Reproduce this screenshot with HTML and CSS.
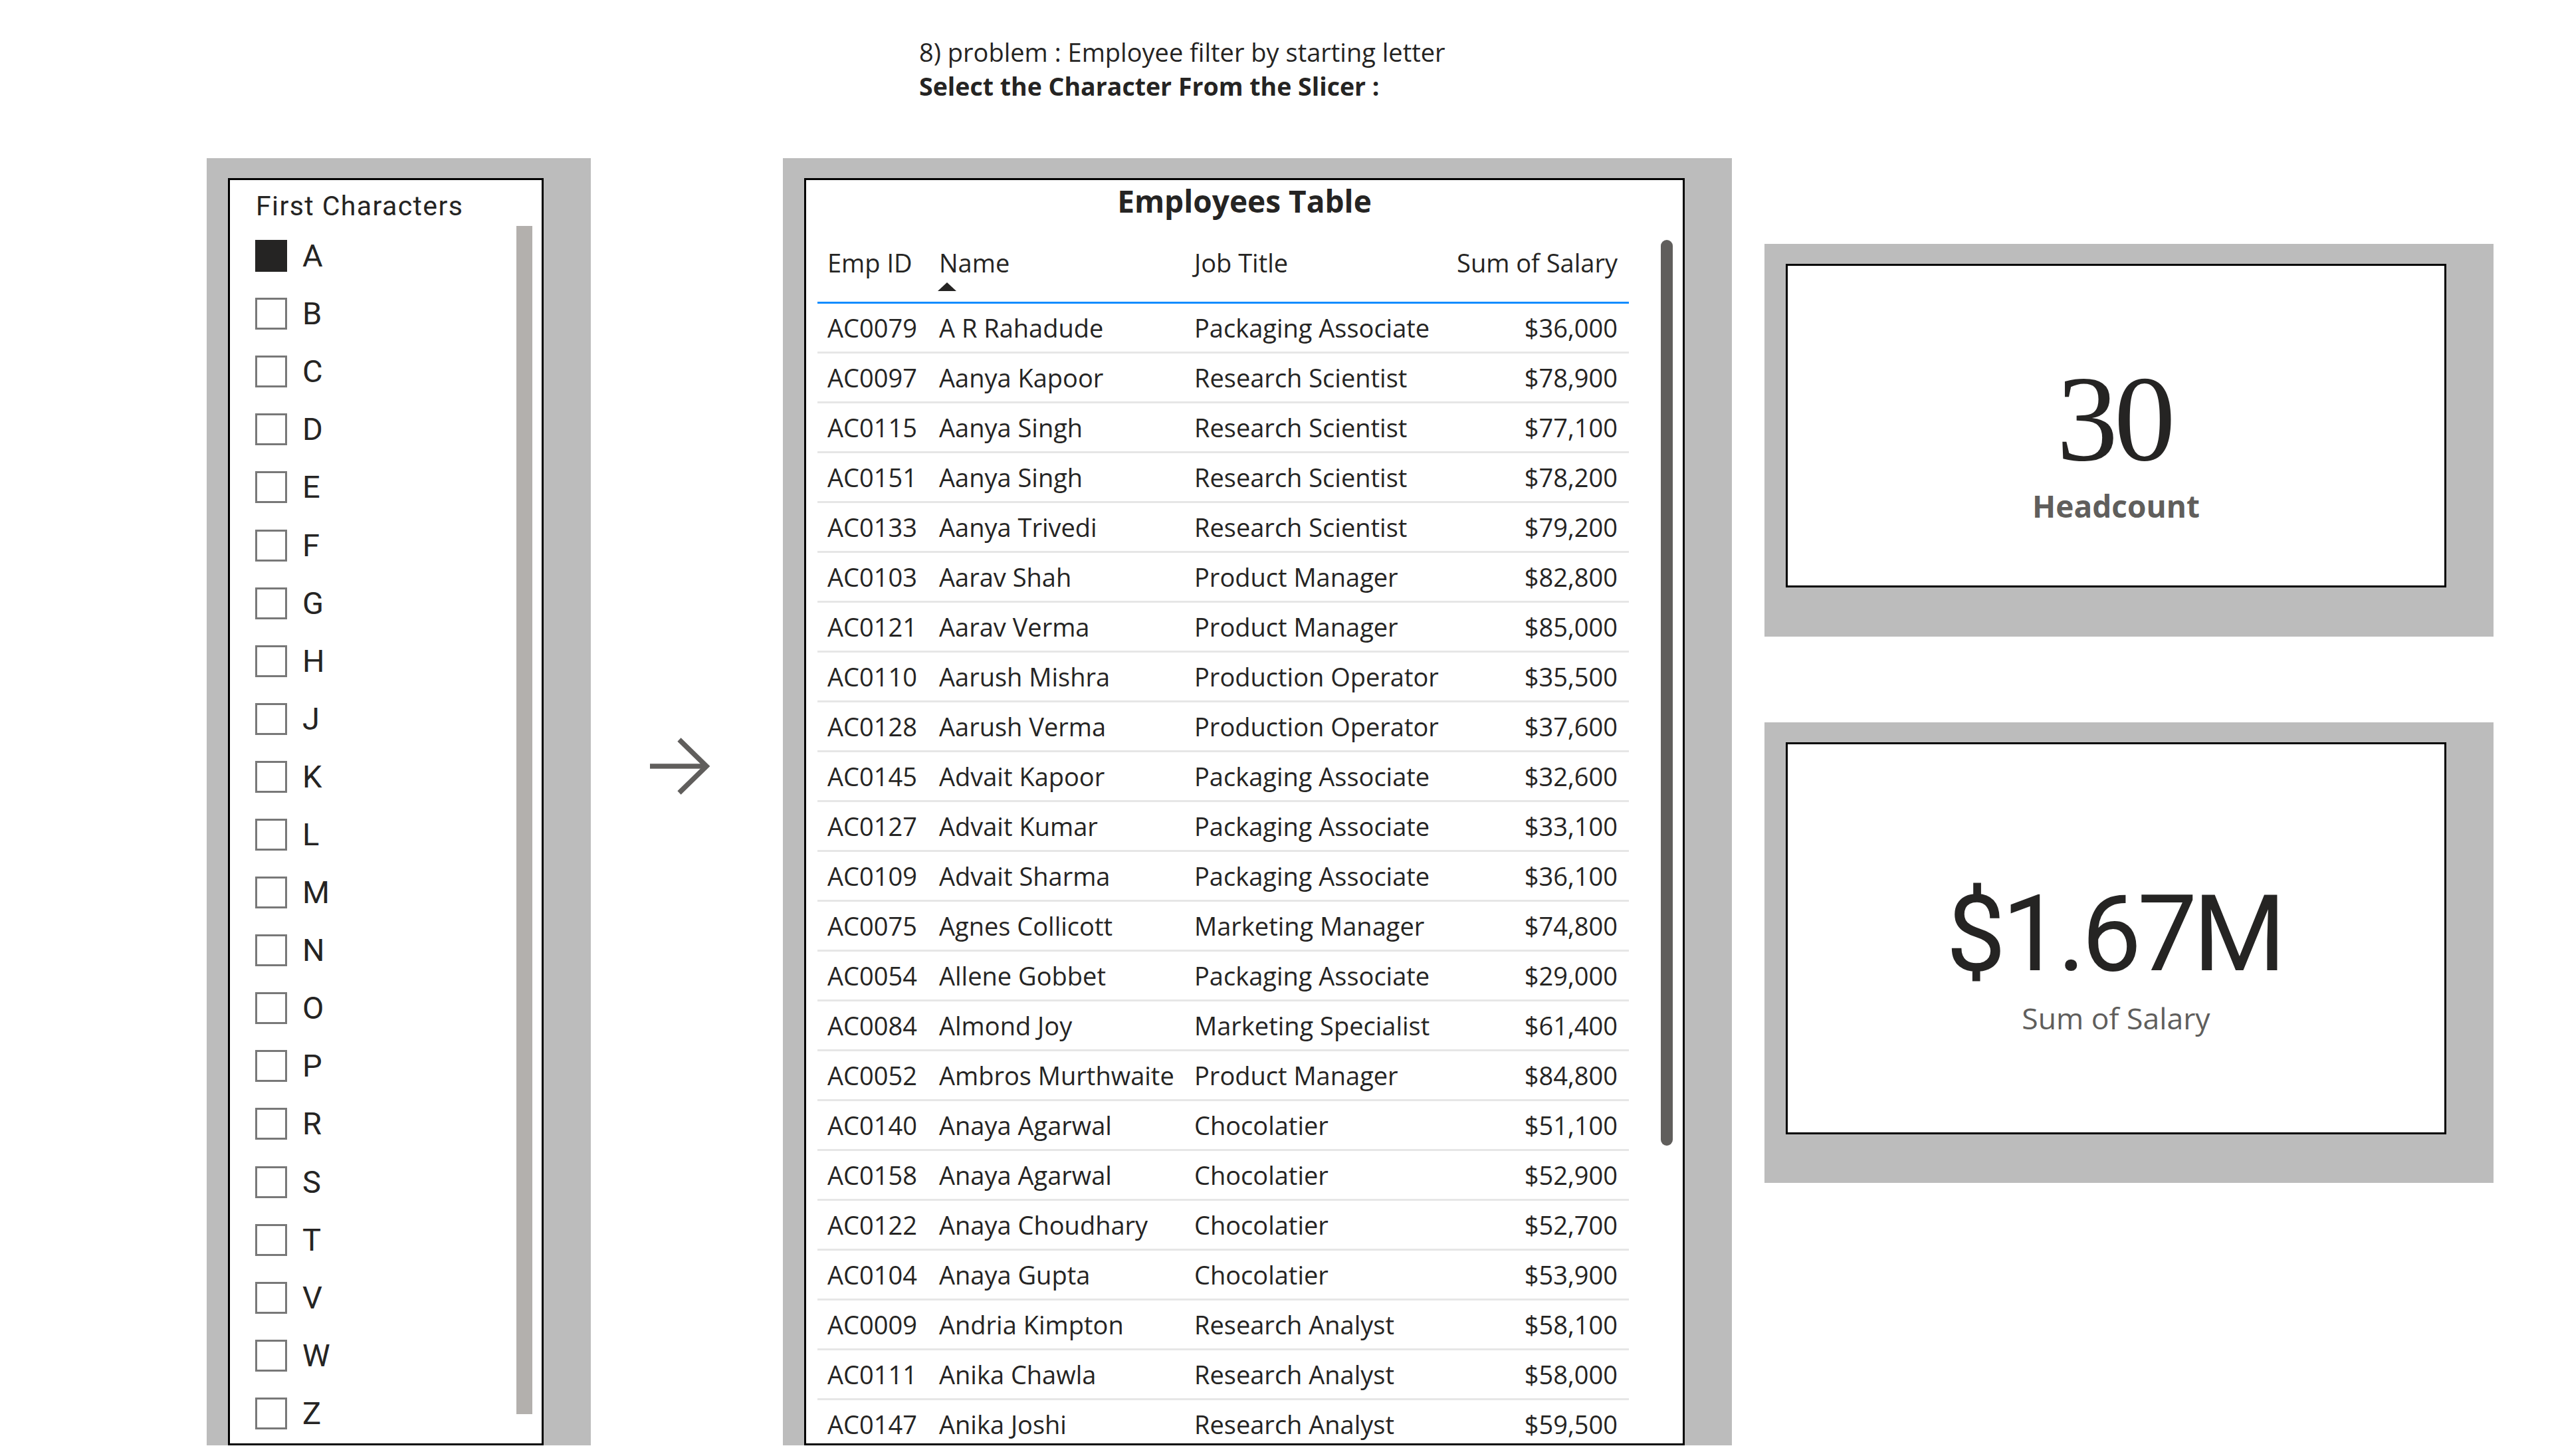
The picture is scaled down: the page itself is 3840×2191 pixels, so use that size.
FILE: index.html
```html
<!DOCTYPE html>
<html lang="en">
<head>
<meta charset="utf-8">
<title>Employee filter by starting letter</title>
<link rel="stylesheet" href="styles.css">
</head>
<body>
<header class="page-header">
  <p>8) problem : Employee filter by starting letter</p>
  <p class="sub">Select the Character From the Slicer :</p>
</header>
<main class="board">
  <section class="panel panel-slicer">
    <div class="panel-inner">
      <div class="slicer-title">First Characters</div>
      <ul class="slicer-list">
        <li class="slicer-item"><span class="check on"></span><span>A</span></li>
        <li class="slicer-item"><span class="check"></span><span>B</span></li>
        <li class="slicer-item"><span class="check"></span><span>C</span></li>
        <li class="slicer-item"><span class="check"></span><span>D</span></li>
        <li class="slicer-item"><span class="check"></span><span>E</span></li>
        <li class="slicer-item"><span class="check"></span><span>F</span></li>
        <li class="slicer-item"><span class="check"></span><span>G</span></li>
        <li class="slicer-item"><span class="check"></span><span>H</span></li>
        <li class="slicer-item"><span class="check"></span><span>J</span></li>
        <li class="slicer-item"><span class="check"></span><span>K</span></li>
        <li class="slicer-item"><span class="check"></span><span>L</span></li>
        <li class="slicer-item"><span class="check"></span><span>M</span></li>
        <li class="slicer-item"><span class="check"></span><span>N</span></li>
        <li class="slicer-item"><span class="check"></span><span>O</span></li>
        <li class="slicer-item"><span class="check"></span><span>P</span></li>
        <li class="slicer-item"><span class="check"></span><span>R</span></li>
        <li class="slicer-item"><span class="check"></span><span>S</span></li>
        <li class="slicer-item"><span class="check"></span><span>T</span></li>
        <li class="slicer-item"><span class="check"></span><span>V</span></li>
        <li class="slicer-item"><span class="check"></span><span>W</span></li>
        <li class="slicer-item"><span class="check"></span><span>Z</span></li>
      </ul>
      <div class="slicer-scroll"></div>
    </div>
  </section>

  <div class="arrow-col">
    <svg class="arrow" width="100" height="100" viewBox="0 0 100 100">
      <path d="M6 50 H91" />
      <path d="M50 10 L91 50 L50 90" />
    </svg>
  </div>

  <section class="panel panel-table">
    <div class="panel-inner">
      <div class="table-title">Employees Table</div>
      <div class="grid">
        <div class="row head">
          <span>Emp ID</span>
          <span class="name-head">Name<svg class="sort" width="28" height="13" viewBox="0 0 28 13"><path d="M14 0 L28 13 L0 13 Z"/></svg></span>
          <span class="job">Job Title</span>
          <span class="num">Sum of Salary</span>
        </div>
        <div class="row"><span>AC0079</span><span>A R Rahadude</span><span class="job">Packaging Associate</span><span class="num">$36,000</span></div>
        <div class="row"><span>AC0097</span><span>Aanya Kapoor</span><span class="job">Research Scientist</span><span class="num">$78,900</span></div>
        <div class="row"><span>AC0115</span><span>Aanya Singh</span><span class="job">Research Scientist</span><span class="num">$77,100</span></div>
        <div class="row"><span>AC0151</span><span>Aanya Singh</span><span class="job">Research Scientist</span><span class="num">$78,200</span></div>
        <div class="row"><span>AC0133</span><span>Aanya Trivedi</span><span class="job">Research Scientist</span><span class="num">$79,200</span></div>
        <div class="row"><span>AC0103</span><span>Aarav Shah</span><span class="job">Product Manager</span><span class="num">$82,800</span></div>
        <div class="row"><span>AC0121</span><span>Aarav Verma</span><span class="job">Product Manager</span><span class="num">$85,000</span></div>
        <div class="row"><span>AC0110</span><span>Aarush Mishra</span><span class="job">Production Operator</span><span class="num">$35,500</span></div>
        <div class="row"><span>AC0128</span><span>Aarush Verma</span><span class="job">Production Operator</span><span class="num">$37,600</span></div>
        <div class="row"><span>AC0145</span><span>Advait Kapoor</span><span class="job">Packaging Associate</span><span class="num">$32,600</span></div>
        <div class="row"><span>AC0127</span><span>Advait Kumar</span><span class="job">Packaging Associate</span><span class="num">$33,100</span></div>
        <div class="row"><span>AC0109</span><span>Advait Sharma</span><span class="job">Packaging Associate</span><span class="num">$36,100</span></div>
        <div class="row"><span>AC0075</span><span>Agnes Collicott</span><span class="job">Marketing Manager</span><span class="num">$74,800</span></div>
        <div class="row"><span>AC0054</span><span>Allene Gobbet</span><span class="job">Packaging Associate</span><span class="num">$29,000</span></div>
        <div class="row"><span>AC0084</span><span>Almond Joy</span><span class="job">Marketing Specialist</span><span class="num">$61,400</span></div>
        <div class="row"><span>AC0052</span><span>Ambros Murthwaite</span><span class="job">Product Manager</span><span class="num">$84,800</span></div>
        <div class="row"><span>AC0140</span><span>Anaya Agarwal</span><span class="job">Chocolatier</span><span class="num">$51,100</span></div>
        <div class="row"><span>AC0158</span><span>Anaya Agarwal</span><span class="job">Chocolatier</span><span class="num">$52,900</span></div>
        <div class="row"><span>AC0122</span><span>Anaya Choudhary</span><span class="job">Chocolatier</span><span class="num">$52,700</span></div>
        <div class="row"><span>AC0104</span><span>Anaya Gupta</span><span class="job">Chocolatier</span><span class="num">$53,900</span></div>
        <div class="row"><span>AC0009</span><span>Andria Kimpton</span><span class="job">Research Analyst</span><span class="num">$58,100</span></div>
        <div class="row"><span>AC0111</span><span>Anika Chawla</span><span class="job">Research Analyst</span><span class="num">$58,000</span></div>
        <div class="row"><span>AC0147</span><span>Anika Joshi</span><span class="job">Research Analyst</span><span class="num">$59,500</span></div>
      </div>
      <div class="table-scroll"></div>
    </div>
  </section>

  <div class="cards">
    <section class="card card-count">
      <div class="card-inner">
        <div class="kpi-num">30</div>
        <div class="kpi-label-bold">Headcount</div>
      </div>
    </section>
    <section class="card card-salary">
      <div class="card-inner">
        <div class="kpi-money">$1.67M</div>
        <div class="kpi-label">Sum of Salary</div>
      </div>
    </section>
  </div>
</main>
</body>
</html>
```

FILE: styles.css
```css
* { box-sizing: border-box; }
html, body { margin: 0; padding: 0; }
body {
  width: 3840px;
  height: 2191px;
  overflow: hidden;
  background: #ffffff;
  font-family: "Open Sans", "Noto Sans", sans-serif;
  color: #252423;
}

.page-header {
  height: 238px;
  padding: 53px 0 0 1383px;
  font-size: 38px;
  line-height: 51px;
}
.page-header p { margin: 0; }
.page-header .sub { font-weight: 700; font-size: 37.5px; }

.board {
  display: flex;
  align-items: flex-start;
  padding-left: 311px;
}

.panel {
  background: #bcbcbc;
  padding: 30px 71px 0 32px;
}
.panel-inner {
  position: relative;
  height: 100%;
  background: #ffffff;
  border: 3px solid #000000;
  overflow: hidden;
}

/* slicer */
.panel-slicer { width: 578px; height: 1937px; flex: none; }
.slicer-title {
  font-family: Roboto, sans-serif;
  font-size: 41px;
  line-height: 48px;
  letter-spacing: 1.4px;
  padding: 15px 0 0 39px;
}
.slicer-list {
  list-style: none;
  margin: 7.5px 0 0 0;
  padding: 0 0 0 38px;
}
.slicer-item {
  height: 87.1px;
  display: flex;
  align-items: center;
  gap: 23px;
  font-family: Roboto, sans-serif;
  font-size: 47px;
  line-height: 56px;
}
.check {
  flex: none;
  width: 48px;
  height: 48px;
  border: 3px solid #787878;
  background: #ffffff;
}
.check.on { background: #252423; border-color: #252423; }
.slicer-scroll {
  position: absolute;
  top: 69px;
  right: 14px;
  width: 24px;
  height: 1788px;
  background: #b3b0ad;
}

/* arrow */
.arrow-col { width: 289px; flex: none; padding: 865px 0 0 83px; }
.arrow { display: block; }
.arrow path { fill: none; stroke: #605e5c; stroke-width: 7.5; }

/* table */
.panel-table { width: 1428px; height: 1937px; flex: none; }
.table-title {
  text-align: center;
  font-weight: 700;
  font-size: 46px;
  line-height: 56px;
  padding-top: 3px;
}
.grid { margin-left: 17px; width: 1221px; }
.row {
  display: grid;
  grid-template-columns: 168px 381px 400px 272px;
  height: 75px;
  font-size: 38px;
  line-height: 72px;
  border-bottom: 3px solid #e6e6e6;
  white-space: nowrap;
}
.row > span { padding-left: 15px; }
.row > .job { padding-left: 18px; }
.row > .num { text-align: right; padding-left: 0; padding-right: 17px; }
.row.head {
  height: 127px;
  padding-top: 40px;
  line-height: 50px;
  align-items: start;
  border-bottom: 3px solid #118dff;
}
.name-head .sort { display: block; margin: 5px 0 0 -2px; fill: #252423; }
.table-scroll {
  position: absolute;
  top: 90px;
  right: 15px;
  width: 18px;
  height: 1363px;
  border-radius: 9px;
  background: #605e5c;
}

/* cards */
.cards { width: 1097px; margin-left: 49px; flex: none; }
.card {
  background: #bcbcbc;
  padding: 30px 71px 0 32px;
}
.card-inner {
  height: 100%;
  background: #ffffff;
  border: 3px solid #000000;
  text-align: center;
}
.card-count { margin-top: 129px; height: 591px; padding-bottom: 74px; }
.card-count .card-inner { padding-top: 137px; }
.card-salary { margin-top: 129px; height: 693px; padding-bottom: 73px; }
.card-salary .card-inner { padding-top: 206px; }

.kpi-num {
  font-family: "Liberation Serif", serif;
  font-size: 185px;
  line-height: 185px;
  letter-spacing: -6px;
  text-indent: -6px;
  color: #252423;
}
.kpi-label-bold {
  margin-top: 11px;
  font-weight: 700;
  font-size: 46px;
  line-height: 56px;
  color: #605e5c;
}
.kpi-money {
  font-family: Roboto, sans-serif;
  font-size: 160px;
  line-height: 160px;
  letter-spacing: -6px;
  text-indent: -6px;
  color: #252423;
}
.kpi-label {
  margin-top: 19px;
  font-size: 44.5px;
  line-height: 54px;
  color: #605e5c;
}
```
